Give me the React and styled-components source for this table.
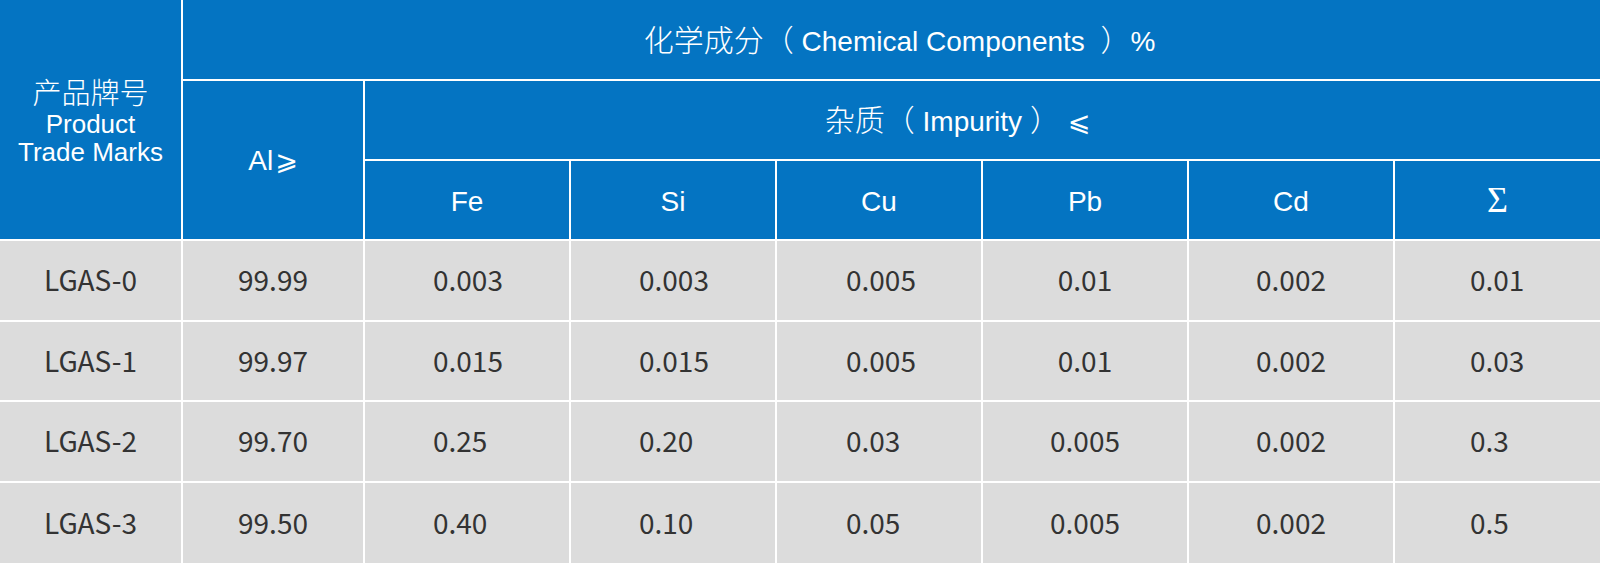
import React from "react"
import styled, { createGlobalStyle } from "styled-components"

const GlobalStyle = createGlobalStyle`
  body {
    margin: 0;
    background: #fff;
  }
`

const Table = styled.table`
  width: 1600px;
  table-layout: fixed;
  border-collapse: collapse;
  border-style: hidden;
`

const Row = styled.tr`
  height: ${p => p.$h}px;
`

const HeadCell = styled.th`
  background: #0474c2;
  color: #fff;
  font-family: "Liberation Sans", "Noto Sans CJK SC", sans-serif;
  font-weight: 400;
  font-size: 28px;
  line-height: 1.1;
  border: 2px solid #fff;
  text-align: center;
  padding: ${p => p.$top || 0}px ${p => p.$right || 0}px 0 ${p => p.$left || 0}px;
`

const Cjk = styled.span`
  font-family: "Noto Sans CJK SC", sans-serif;
  font-size: ${p => p.$size || 30}px;
  font-weight: 300;
`

const Mark = styled.span`
  font-family: "DejaVu Sans", "Noto Sans CJK SC", sans-serif;
  font-size: 27px;
  margin-left: ${p => p.$gap || 0}px;
`

const Sigma = styled.span`
  font-family: "Liberation Serif", serif;
  font-size: 36px;
`

const BrandHead = styled.div`
  display: flex;
  flex-direction: column;
  align-items: center;
  line-height: 28px;
  font-size: 26px;
  padding-top: 2px;
`

const BrandCjk = styled(Cjk)`
  line-height: 30px;
  margin-bottom: 4px;
`

const Cell = styled.td`
  background: #dcdcdc;
  color: #333;
  font-family: "Noto Sans CJK SC", sans-serif;
  font-size: 28px;
  border: 2px solid #fff;
  text-align: ${p => (p.$pad ? "left" : "center")};
  padding: 0 0 3px ${p => p.$pad || 0}px;
`

const widths = [182, 182, 206, 206, 206, 206, 206, 206]
const pads = [0, 0, 68, 68, 69, 0, 0, 75]

const rows = [
  ["LGAS-0", "99.99", "0.003", "0.003", "0.005", "0.01", "0.002", "0.01"],
  ["LGAS-1", "99.97", "0.015", "0.015", "0.005", "0.01", "0.002", "0.03"],
  ["LGAS-2", "99.70", "0.25", "0.20", "0.03", "0.005", "0.002", "0.3"],
  ["LGAS-3", "99.50", "0.40", "0.10", "0.05", "0.005", "0.002", "0.5"],
]
const rowHeights = [81, 80, 81, 81]

export default function App() {
  return (
    <>
      <GlobalStyle />
      <Table>
        <colgroup>
          {widths.map((w, i) => <col key={i} style={{ width: w }} />)}
        </colgroup>
        <thead>
          <Row $h={80}>
            <HeadCell rowSpan={3}>
              <BrandHead>
                <BrandCjk $size={29}>产品牌号</BrandCjk>
                <span>Product</span>
                <span>Trade Marks</span>
              </BrandHead>
            </HeadCell>
            <HeadCell colSpan={7} $left={16} $top={0}>
              <Cjk>化学成分（</Cjk> Chemical Components&nbsp; <Cjk>）</Cjk>%
            </HeadCell>
          </Row>
          <Row $h={80}>
            <HeadCell rowSpan={2} $top={2}>
              Al<Mark $gap={2}>⩾</Mark>
            </HeadCell>
            <HeadCell colSpan={6} $right={50}>
              <Cjk>杂质（</Cjk> Impurity <Cjk>）</Cjk> <Mark>⩽</Mark>
            </HeadCell>
          </Row>
          <Row $h={80}>
            <HeadCell $top={4}>Fe</HeadCell>
            <HeadCell $top={4}>Si</HeadCell>
            <HeadCell $top={4}>Cu</HeadCell>
            <HeadCell $top={4}>Pb</HeadCell>
            <HeadCell $top={4}>Cd</HeadCell>
            <HeadCell $top={2}><Sigma>Σ</Sigma></HeadCell>
          </Row>
        </thead>
        <tbody>
          {rows.map((r, ri) => (
            <Row key={r[0]} $h={rowHeights[ri]}>
              {r.map((v, ci) => (
                <Cell key={ci} $pad={pads[ci]}>{v}</Cell>
              ))}
            </Row>
          ))}
        </tbody>
      </Table>
    </>
  )
}
